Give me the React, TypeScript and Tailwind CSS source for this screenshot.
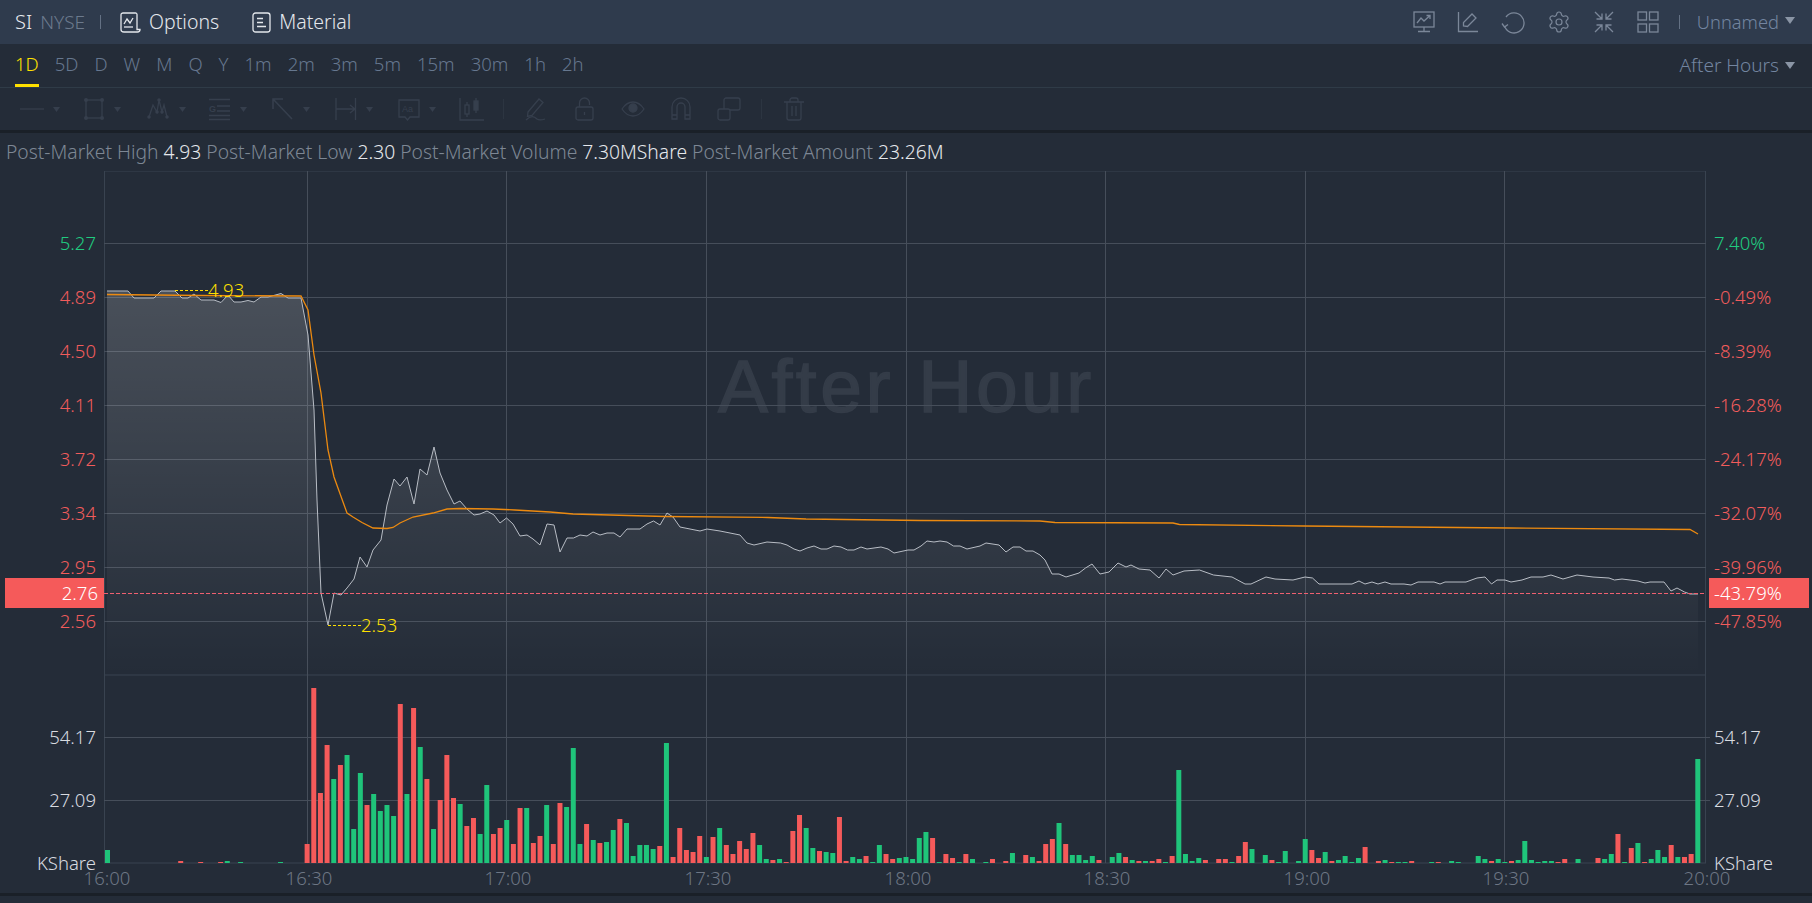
import React from "react";
import { Settings } from "lucide-react";

const uiFont = "font-['Noto_Sans','Open_Sans',sans-serif]";

const tabs = ["1D", "5D", "D", "W", "M", "Q", "Y", "1m", "2m", "3m", "5m", "15m", "30m", "1h", "2h"];

const priceLine = "107,291 128,291 134,298 154,298 161,291 175,291 182,298 188,298 194,294 201,300 214,300 221,302.5 228,295 234,302 241,302 248,300.5 254,302 261,297 268,297 281,293.5 288,298 301,298 308,335 314,410 317,500 321,593 328,625 334,593 341,595 347,588 354,579 360,557 367,567 373,550 381,540 387,505 394,479 400,486 407,477 414,504 420,469 427,475 434,447 440,473 447,490 454,504 460,501 467,509 474,515 480,514 487,511 494,515 500,523 506.5,518 513,524 520,536 527,535 533,539 540,545 547,524 554,525 560,552 567,538 573.5,538 580,535 587,536 593,532 600,535 607,533 614,533 620,537 627,529 640,529 647,524 653.5,521 660,525 667,513 673,517 680,527 700,531 707,529 720,531 740,535 747,543 754,545 767,542 780.5,543 787,545 794,549 800,551 807,548 814,546 821,549 827,549 834,546 841,547 847.5,550 854,550 861,547 867,549 874,548 881,547 888,549 894,553 908,550 914,550 921,546 927,541 934,542 940,541 947,542 953.5,546 960,546 967,549 980,546 986,543 999,545 1006,552 1013,547 1020,547 1026,551 1033,551 1040,555 1045,560 1052,574 1059,574 1066,577 1079,573 1085.5,568 1092,564 1100,574 1109,572 1118,563 1126,567 1131,565 1139,569 1150,570 1159,578 1166,569 1173,575 1184,571 1199.5,570 1213.5,575 1232,577 1245,584 1251,584 1266,577 1275,579 1293,580 1305,577 1312.5,578 1319,584 1352,584 1359,581 1365,584 1372,582 1378,584 1385,582 1391,584 1404,584 1411,585 1418,582 1434,582 1440,584 1445,582 1466,582 1477,578 1485,577 1491.5,584 1497,580 1505,580 1511,582 1522,580 1531,577 1543,577 1551,575 1563,579 1577,575 1593,577 1609,578 1614.5,580 1622,579 1638,581 1645,583 1650,582 1664,582 1671,591 1677,588 1684.5,592 1690,594 1698,594";

const avgLine = "107,294.5 200,295.5 301,296 308,310 314,355 321,393 328,450 334,477 347,513 353,517 362,522.5 373,528 387,528.5 393,527.5 400,523 413,517 433,513 447,509 460,508.5 493,509 515,510 550,512 573,514 665,516.5 768,517.5 806,519 921,520.5 1040,521 1055,522.5 1173,523 1179.5,524.5 1304,526 1509,528 1690,529.5 1698,534";

// positive = red bar, negative = green bar, index = minute after 16:00
const volumes = [
    -13, 0, 0, 0, 0, 0, 0, 0, 0, 0, 0, 2, 0, 0, 1, 0, 0, 1, -2, 0,
    -1, 0, 0, 0, 0, 0, -1, 0, 0, 0, 19, 175, 70, 118, -84, 98, -108, -34, -90, 58,
    -69, -52, -58, -47, 159, -69, 155, -116, 84, -34, 63, 108, 65, -59, 37, 45, -29, -78, 29, 35,
    -43, 19, 55, -55, 20, 27, -58, 19, 60, -56, -115, -19, 39, -23, 20, -21, -33, 44, -40, -7,
    -18, -18, -14, 17, -120, 6, 35, 13, 11, 27, -6, 26, -35, 18, 9, 22, 14, 30, -18, -4,
    3, -4, 1, 32, 48, -35, -15, 12, -11, -10, 46, 2, -6, -4, 7, -1, -18, 9, 4, -5,
    -6, -4, -25, -31, 25, -1, 9, 5, -1, 9, -4, 0, -1, 4, 0, 2, -10, 0, 8, -6,
    2, 19, 24, -40, 19, -8, -8, -3, -7, 3, 0, -6, -10, 6, -3, 2, -2, 2, 4, -1,
    7, -93, -9, -2, -5, 3, 0, 4, 4, -1, 7, 21, -14, 0, -8, 3, -1, -12, 0, -2,
    -24, 13, 5, -11, 2, -3, -7, -1, -5, 16, 0, 2, -3, 1, -1, -1, 2, 0, 0, -1,
    1, 0, -2, -1, 0, 0, -7, -4, 2, -4, -1, 2, -3, -22, -3, -1, -2, -2, 1, 4,
    0, -4, 0, 0, 5, -4, -9, 29, -1, 15, -20, 1, -4, -13, -6, 18, -6, 6, 9, -104,
];

const priceRows = [
    { y: 243, left: "5.27", right: "7.40%", color: "#20cc80" },
    { y: 297, left: "4.89", right: "-0.49%", color: "#f25c5c" },
    { y: 351, left: "4.50", right: "-8.39%", color: "#f25c5c" },
    { y: 405, left: "4.11", right: "-16.28%", color: "#f25c5c" },
    { y: 459, left: "3.72", right: "-24.17%", color: "#f25c5c" },
    { y: 513, left: "3.34", right: "-32.07%", color: "#f25c5c" },
    { y: 567, left: "2.95", right: "-39.96%", color: "#f25c5c" },
    { y: 621, left: "2.56", right: "-47.85%", color: "#f25c5c" },
];

const timeRows = [
    { x: 105, label: "16:00" },
    { x: 307, label: "16:30" },
    { x: 506, label: "17:00" },
    { x: 706, label: "17:30" },
    { x: 906, label: "18:00" },
    { x: 1105, label: "18:30" },
    { x: 1305, label: "19:00" },
    { x: 1504, label: "19:30" },
    { x: 1705, label: "20:00" },
];

const Caret = ({ className }: { className: string }) => (
    <svg width="10" height="7" viewBox="0 0 10 7" className={className}>
        <path d="M0 0H10L5 7Z" fill="currentColor" />
    </svg>
);

const Icon = ({ w, h = 24, children }: { w: number; h?: number; children: React.ReactNode }) => (
    <svg width={w} height={h} viewBox={`0 0 ${w} ${h}`} fill="none" stroke="currentColor" strokeWidth="1.3">
        {children}
    </svg>
);

const ToolGroup = ({ children }: { children: React.ReactNode }) => (
    <div className="flex w-[63px] shrink-0 items-center gap-[9px]">
        {children}
        <svg width="7" height="5" viewBox="0 0 7 5"><path d="M0 0H7L3.5 5Z" fill="currentColor" /></svg>
    </div>
);

const HeaderBar = () => (
    <div className={`flex h-[44px] items-center bg-[#2f3b4d] text-[19.5px] ${uiFont}`}>
        <span className="ml-[15px] text-[20px] font-light text-[#e6e9ee]">SI</span>
        <span className="ml-[8px] text-[19px] font-light text-[#6c7a8d]">NYSE</span>
        <div className="ml-[15px] h-[14px] w-px bg-[#647184]"></div>
        <div className="ml-[19px] flex items-center gap-[8px] font-light text-[#e4e7ec]">
            <svg width="21" height="21" viewBox="0 0 21 21" fill="none" stroke="currentColor" strokeWidth="1.3">
                <path d="M4 20H17.5C19 20 20 19 20 17.5H17V2.5C17 1.5 16.2 1 15.5 1H3C2 1 1 1.8 1 2.8V17.5C1 19 2.2 20 4 20H16" />
                <path d="M4 12L7 7L10 11L13 6" />
                <path d="M4 15H13" />
            </svg>
            <span>Options</span>
        </div>
        <div className="ml-[33px] flex items-center gap-[8px] font-light text-[#e4e7ec]">
            <svg width="19" height="21" viewBox="0 0 19 21" fill="none" stroke="currentColor" strokeWidth="1.3">
                <rect x="1" y="1" width="17" height="19" rx="2.5" />
                <path d="M5 6.5H11M5 10.5H11M5 14.5H14" />
            </svg>
            <span>Material</span>
        </div>
        <div className="ml-auto flex items-center gap-[22px] text-[#7b8799]">
            <Icon w={22}>
                <rect x="1" y="2" width="20" height="15" />
                <path d="M4 13L8 8L11 11L17 5.5M13.5 5.5H17V9M11 17V21M5 21.5H17" />
            </Icon>
            <Icon w={22}>
                <path d="M1.5 2V21.5H21" />
                <path d="M6.5 16V12.5L15 4L19 8L10.5 16.5Z" />
            </Icon>
            <Icon w={24}>
                <path d="M5 7A10 10 0 1 1 3.5 16" />
                <path d="M1 13.5L3.5 17L7 14.5" />
            </Icon>
            <Settings size={24} strokeWidth={1.2} />
            <Icon w={22}>
                <path d="M2 2L9 9M9 3.5V9H3.5M20 2L13 9M13 3.5V9H18.5M2 22L9 15M9 20.5V15H3.5M20 22L13 15M13 20.5V15H18.5" />
            </Icon>
            <Icon w={22}>
                <rect x="1" y="2" width="8.5" height="8" />
                <rect x="12.5" y="2" width="8.5" height="8" />
                <rect x="1" y="14" width="8.5" height="8" />
                <rect x="12.5" y="14" width="8.5" height="8" />
            </Icon>
        </div>
        <div className="ml-[20px] h-[14px] w-px bg-[#647184]"></div>
        <span className="ml-[17px] text-[18.3px] font-light text-[#7385a0]">Unnamed</span>
        <Caret className="mb-[3px] ml-[6px] mr-[17px] text-[#8a95a5]" />
    </div>
);

const PeriodBar = () => (
    <div className={`flex h-[44px] items-stretch border-b border-[#2f3b47] pl-[15px] text-[18.5px] font-light text-[#66778f] ${uiFont}`}>
        <div className="flex gap-[16px]">
            {tabs.map((tab) => (
                <div
                    key={tab}
                    className={tab === "1D" ? "flex items-center border-b-[3px] border-[#ffe000] text-[#ffe000]" : "flex items-center border-b-[3px] border-transparent"}
                >
                    {tab}
                </div>
            ))}
        </div>
        <div className="ml-auto flex items-center text-[19px] text-[#7385a0]">
            After Hours
            <Caret className="ml-[6px] mr-[17px] text-[#8a95a5]" />
        </div>
    </div>
);

const DrawBar = () => (
    <div className="flex h-[45px] items-center border-b-[3px] border-[#1a2028] pl-[20px] text-[#363f4d]">
        <ToolGroup>
            <Icon w={24}><path d="M0 12H24" /></Icon>
        </ToolGroup>
        <ToolGroup>
            <Icon w={22}>
                <rect x="3" y="3" width="16" height="18" />
                <path d="M3 3h.01M19 3h.01M3 21h.01M19 21h.01" strokeWidth="4" strokeLinecap="round" />
            </Icon>
        </ToolGroup>
        <ToolGroup>
            <Icon w={24}>
                <path d="M3 20L7 8L11 15L13 3L16 15L18 8L21 20" />
                <path d="M3 20h.01M13 3h.01M21 20h.01M11 15h.01M16 15h.01" strokeWidth="3.5" strokeLinecap="round" />
            </Icon>
        </ToolGroup>
        <ToolGroup>
            <Icon w={22}>
                <path d="M0 2.5H21M8 9H21M8 14H21M0 18.5H21M0 22.5H21" />
                <text x="0" y="15" fontSize="9" fontWeight="700" fill="currentColor" stroke="none" fontFamily="Liberation Sans">G</text>
            </Icon>
        </ToolGroup>
        <ToolGroup>
            <Icon w={22}>
                <path d="M1 2L20 22M1 12V2H11" strokeWidth="1.6" />
            </Icon>
        </ToolGroup>
        <ToolGroup>
            <Icon w={22}>
                <path d="M1 1V23M20.5 1V23M1 12H20M15 8L20 12L15 16" />
            </Icon>
        </ToolGroup>
        <div className="flex w-[61px] shrink-0 items-center gap-[9px]">
            <Icon w={22}>
                <path d="M1 3H21V20H12L9.5 23L7 20H1Z" />
                <text x="4" y="15" fontSize="9" fill="currentColor" stroke="none" fontFamily="Liberation Sans">Aa</text>
            </Icon>
            <svg width="7" height="5" viewBox="0 0 7 5"><path d="M0 0H7L3.5 5Z" fill="currentColor" /></svg>
        </div>
        <Icon w={26}>
            <path d="M1 1V23H25" />
            <rect x="6" y="8" width="4" height="9" />
            <path d="M8 5V8M8 17V20" />
            <rect x="15" y="4" width="4" height="9" fill="currentColor" />
            <path d="M17 1V4M17 13V16" />
        </Icon>
        <div className="ml-[18px] h-[20px] w-px bg-[#2c3541]"></div>
        <div className="ml-[21px]">
            <Icon w={21}>
                <path d="M3 15L14 2L18 5.5L7 18.5L2.5 19.5Z" />
                <path d="M1 23C6 18 9 19 12 22C14 23.5 17 23 20 22" />
            </Icon>
        </div>
        <div className="ml-[29px]">
            <Icon w={19}>
                <rect x="1" y="10" width="17" height="13" rx="2" />
                <path d="M4.5 10V6A5 5 0 0 1 14.5 6V8M9.5 15V18" />
            </Icon>
        </div>
        <div className="ml-[27px]">
            <Icon w={24}>
                <path d="M1 12C5 6 8.5 5 12 5S19 6 23 12C19 18 15.5 19 12 19S5 18 1 12Z" />
                <circle cx="12" cy="11" r="4" fill="currentColor" />
            </Icon>
        </div>
        <div className="ml-[26px]">
            <Icon w={20}>
                <path d="M1 22V10A9 9 0 0 1 19 10V22H14V10A4 4 0 0 0 6 10V22ZM1 18H6M14 18H19" />
            </Icon>
        </div>
        <div className="ml-[26px]">
            <Icon w={24}>
                <rect x="1" y="12" width="12" height="11" rx="2" />
                <path d="M7 12V3C7 2 8 1 9 1H21C22 1 23 2 23 3V11C23 12 22 13 21 13H13" />
            </Icon>
        </div>
        <div className="ml-[20px] h-[20px] w-px bg-[#2c3541]"></div>
        <div className="ml-[22px]">
            <Icon w={20}>
                <path d="M0 5H20M6 5V3C6 2 7 1 8 1H12C13 1 14 2 14 3V5M3 5V21C3 22 4 23 5 23H15C16 23 17 22 17 21V5M8 9V19M12 9V19" />
            </Icon>
        </div>
    </div>
);

const StatsRow = () => (
    <div className={`flex h-[38px] items-center whitespace-pre pl-[6px] text-[19.3px] font-light text-[#7d8794] ${uiFont}`}>
        Post-Market High <span className="text-[#e6e8ec]">4.93</span> Post-Market Low <span className="text-[#e6e8ec]">2.30</span> Post-Market Volume <span className="text-[#e6e8ec]">7.30MShare</span> Post-Market Amount <span className="text-[#e6e8ec]">23.26M</span>
    </div>
);

const Chart = () => {
    const points = priceLine.split(" ");
    const area = `M${points.join(" L")} L1698,675 L107,675 Z`;
    const fontStack = "'Noto Sans','Open Sans',sans-serif";

    return (
        <svg width="1812" height="722" viewBox="0 171 1812 722" className="block font-light" fontFamily={fontStack} fontSize="18.5">
            <defs>
                <linearGradient id="areaFill" gradientUnits="userSpaceOnUse" x1="0" y1="291" x2="0" y2="675">
                    <stop offset="0" stopColor="#fff" stopOpacity="0.17" />
                    <stop offset="1" stopColor="#fff" stopOpacity="0" />
                </linearGradient>
            </defs>

            <text x="718" y="412" letterSpacing="3.5" fontFamily="'Liberation Sans',sans-serif" fontWeight="400" fontSize="75" fill="#343c48" stroke="#343c48" strokeWidth="1.5">After Hour</text>

            <path d="M104 171H1706M104 675H1706M104 863H1706M104.5 171V863M1705.5 171V863" stroke="#394350" fill="none" />
            {priceRows.map((row) => (
                <path key={row.y} d={`M104 ${row.y + 0.5}H1706`} stroke="#464e5a" />
            ))}
            <path d="M104 737.5H1710M104 800.5H1710" stroke="#464e5a" />
            {timeRows.slice(1, 8).map((row) => (
                <path key={row.x} d={`M${row.x + 0.5} 171V863`} stroke="#464e5a" />
            ))}

            <path d={area} fill="url(#areaFill)" />
            <polyline points={priceLine} fill="none" stroke="#b8bdc5" strokeWidth="1" />
            <polyline points={avgLine} fill="none" stroke="#ec8a10" strokeWidth="1.3" />

            <path d="M175 290.5H208M328 625.5H362" stroke="#ffe000" strokeDasharray="3 2" />
            <text x="208" y="297" fill="#ffe000">4.93</text>
            <text x="361" y="632" fill="#ffe000">2.53</text>

            <path d="M104 593.5H1706" stroke="#f06070" strokeDasharray="4 2" />

            {volumes.map((v, i) =>
                v === 0 ? null : (
                    <rect
                        key={i}
                        x={105 + i * 6.654}
                        y={863 - Math.abs(v)}
                        width="5"
                        height={Math.abs(v)}
                        fill={v > 0 ? "#f55a5a" : "#1fc47a"}
                    />
                )
            )}

            {priceRows.map((row) => (
                <g key={row.y} fill={row.color}>
                    <text x="96" y={row.y + 6.5} textAnchor="end">{row.left}</text>
                    <text x="1714" y={row.y + 6.5}>{row.right}</text>
                </g>
            ))}

            <rect x="5" y="578" width="99" height="30" fill="#f55a5a" />
            <rect x="1709" y="578" width="100" height="30" fill="#f55a5a" />
            <text x="98" y="600" textAnchor="end" fill="#fff">2.76</text>
            <text x="1714" y="600" fill="#fff">-43.79%</text>

            <g fill="#d8dbe0">
                <text x="96" y="744" textAnchor="end">54.17</text>
                <text x="96" y="807" textAnchor="end">27.09</text>
                <text x="96" y="870" textAnchor="end">KShare</text>
                <text x="1714" y="744">54.17</text>
                <text x="1714" y="807">27.09</text>
                <text x="1714" y="870">KShare</text>
            </g>

            <g fill="#6d7684">
                {timeRows.map((row) => (
                    <text key={row.x} x={row.x + 2} y="885" textAnchor="middle">{row.label}</text>
                ))}
            </g>
        </svg>
    );
};

const App: React.FC = () => {
    return (
        <div className="h-screen w-full overflow-hidden bg-[#242c38]">
            <HeaderBar />
            <PeriodBar />
            <DrawBar />
            <StatsRow />
            <Chart />
            <div className="h-[3px] bg-[#1a2028]"></div>
        </div>
    );
};

export default App;
